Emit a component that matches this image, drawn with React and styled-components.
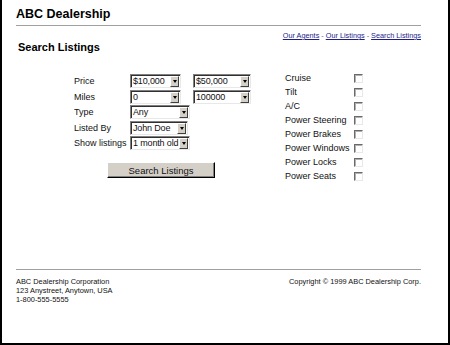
import React from "react";
import styled, { createGlobalStyle } from "styled-components";

const Global = createGlobalStyle`
  html, body { margin: 0; padding: 0; background: #fff; }
  body { font-family: "Liberation Sans", Arial, sans-serif; color: #000; }
`;

const Page = styled.div`
  width: 450px;
  height: 345px;
  box-sizing: border-box;
  border: 2px solid #000;
  border-top: none;
  padding: 0 27px 0 14px;
  display: flex;
  flex-direction: column;
  background: #fff;
`;

const Title = styled.h1`
  margin: 6px 0 0;
  font-size: 12.5px;
  line-height: 16px;
  font-weight: bold;
`;

const Rule = styled.div`
  margin-top: 3px;
  border-top: 1px solid #a0a0a0;
  height: 0;
`;

const Links = styled.div`
  margin-top: 5px;
  display: flex;
  justify-content: flex-end;
  gap: 2px;
  font-size: 7.3px;
  line-height: 10px;
  color: #666;
`;

const Link = styled.a`
  color: #1c1c8a;
  text-decoration: underline;
`;

const Heading = styled.h2`
  margin: 0 0 0 2px;
  font-size: 11px;
  line-height: 13px;
  font-weight: bold;
`;

const Main = styled.div`
  flex: 1;
  display: flex;
  align-items: flex-start;
  margin-top: 17px;
  padding-left: 58px;
  gap: 34px;
`;

const LeftCol = styled.div`
  width: 177px;
  padding-top: 3px;
  display: flex;
  flex-direction: column;
`;

const FormGrid = styled.div`
  display: grid;
  grid-template-columns: 56px auto;
  row-gap: 1.5px;
  align-items: center;
`;

const Label = styled.span`
  font-size: 9px;
  line-height: 14px;
  white-space: nowrap;
  color: #111;
`;

const Controls = styled.div`
  display: flex;
  gap: ${(p) => p.$gap || 0}px;
`;

const SelectBox = styled.div`
  width: ${(p) => p.$w}px;
  height: 14px;
  box-sizing: border-box;
  border: 1px solid;
  border-color: #808080 #e8e8e8 #e8e8e8 #808080;
  box-shadow: inset 1px 1px 0 #303030;
  background: #fff;
  display: flex;
  align-items: stretch;
  padding: 1px 1px 0 1px;
`;

const SelectValue = styled.span`
  flex: 1;
  font-size: 9px;
  line-height: 11px;
  letter-spacing: -0.15px;
  padding-left: 1px;
  white-space: nowrap;
  overflow: hidden;
  color: #111;
`;

const ArrowBtn = styled.span`
  width: 9px;
  height: 11px;
  box-sizing: border-box;
  background: #d4d0c8;
  border: 1px solid;
  border-color: #fff #404040 #404040 #fff;
  display: flex;
  align-items: center;
  justify-content: center;
`;

const Tri = styled.span`
  width: 0;
  height: 0;
  border-left: 2.5px solid transparent;
  border-right: 2.5px solid transparent;
  border-top: 3px solid #000;
`;

const Button = styled.button`
  margin: 12px 0 0 33px;
  width: 108px;
  height: 16px;
  box-sizing: border-box;
  padding: 0;
  background: #d4d0c8;
  border: 1px solid;
  border-color: #fff #000 #000 #fff;
  box-shadow: inset -1px -1px 0 #808080;
  font-family: "Liberation Sans", Arial, sans-serif;
  font-size: 9.5px;
  line-height: 13px;
  color: #111;
`;

const RightCol = styled.div`
  display: grid;
  grid-template-columns: 69px 9px;
  grid-auto-rows: 14px;
  align-items: center;
`;

const Check = styled.span`
  width: 9px;
  height: 9px;
  box-sizing: border-box;
  border: 1px solid;
  border-color: #6a6a6a #e8e8e8 #e8e8e8 #6a6a6a;
  box-shadow: inset 1px 1px 0 #b0b0b0;
  background: #fff;
`;

const Footer = styled.div`
  height: 74px;
  box-sizing: border-box;
  border-top: 1px solid #a0a0a0;
  padding-top: 7px;
  display: flex;
  justify-content: space-between;
  align-items: flex-start;
  font-size: 7.4px;
  line-height: 9px;
  color: #111;
`;

const Address = styled.div`
  display: flex;
  flex-direction: column;
`;

function Select({ w, value }) {
  return (
    <SelectBox $w={w}>
      <SelectValue>{value}</SelectValue>
      <ArrowBtn>
        <Tri />
      </ArrowBtn>
    </SelectBox>
  );
}

const features = [
  "Cruise",
  "Tilt",
  "A/C",
  "Power Steering",
  "Power Brakes",
  "Power Windows",
  "Power Locks",
  "Power Seats",
];

export default function App() {
  return (
    <>
      <Global />
      <Page>
        <Title>ABC Dealership</Title>
        <Rule />
        <Links>
          <Link>Our Agents</Link>-<Link>Our Listings</Link>-
          <Link>Search Listings</Link>
        </Links>
        <Heading>Search Listings</Heading>
        <Main>
          <LeftCol>
            <FormGrid>
              <Label>Price</Label>
              <Controls $gap={12}>
                <Select w={51} value="$10,000" />
                <Select w={58} value="$50,000" />
              </Controls>
              <Label>Miles</Label>
              <Controls $gap={12}>
                <Select w={51} value="0" />
                <Select w={58} value="100000" />
              </Controls>
              <Label>Type</Label>
              <Controls>
                <Select w={60} value="Any" />
              </Controls>
              <Label>Listed By</Label>
              <Controls>
                <Select w={58} value="John Doe" />
              </Controls>
              <Label>Show listings</Label>
              <Controls>
                <Select w={60} value="1 month old" />
              </Controls>
            </FormGrid>
            <Button>Search Listings</Button>
          </LeftCol>
          <RightCol>
            {features.map((f) => (
              <React.Fragment key={f}>
                <Label>{f}</Label>
                <Check />
              </React.Fragment>
            ))}
          </RightCol>
        </Main>
        <Footer>
          <Address>
            <span>ABC Dealership Corporation</span>
            <span>123 Anystreet, Anytown, USA</span>
            <span>1-800-555-5555</span>
          </Address>
          <span>Copyright © 1999 ABC Dealership Corp.</span>
        </Footer>
      </Page>
    </>
  );
}
